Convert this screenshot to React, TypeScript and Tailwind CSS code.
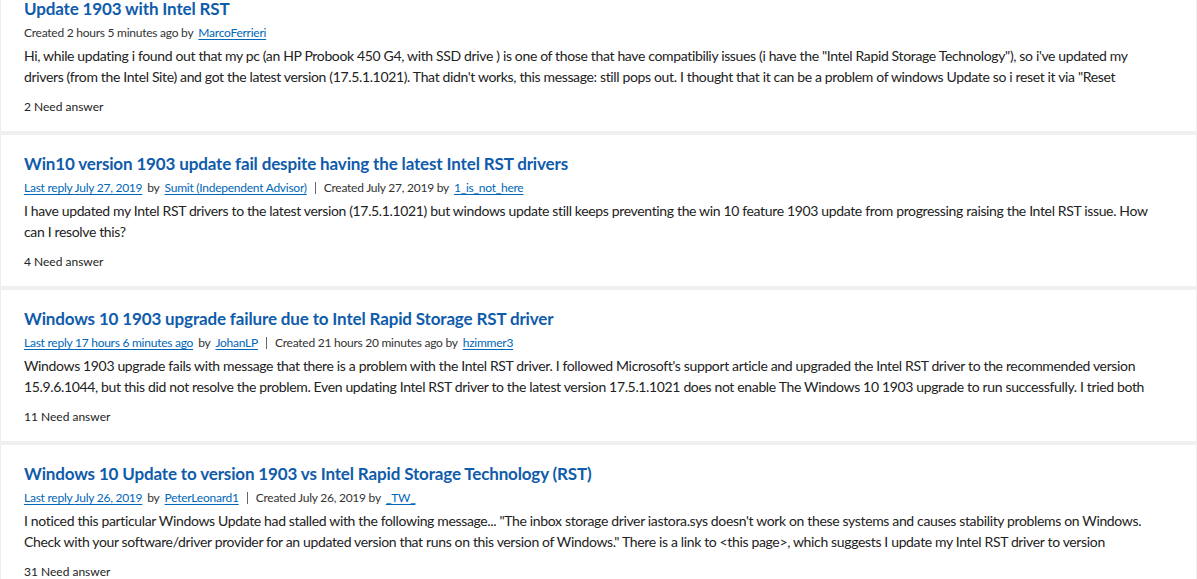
const FONT = "font-['Lato','Segoe_UI',sans-serif]";

type Post = {
  title: string;
  lastReply?: { when: string; by: string };
  created: string;
  createdBy: string;
  body: string;
  count: number;
};

const POSTS: Post[] = [
  {
    title: 'Update 1903 with Intel RST',
    created: '2 hours 5 minutes ago',
    createdBy: 'MarcoFerrieri',
    body:
      'Hi, while updating i found out that my pc (an HP Probook 450 G4, with SSD drive ) is one of those that have compatibiliy issues (i have the "Intel Rapid Storage Technology"), so i\'ve updated my drivers (from the Intel Site) and got the latest version (17.5.1.1021). That didn\'t works, this message: still pops out. I thought that it can be a problem of windows Update so i reset it via "Reset',
    count: 2,
  },
  {
    title: 'Win10 version 1903 update fail despite having the latest Intel RST drivers',
    lastReply: { when: 'July 27, 2019', by: 'Sumit (Independent Advisor)' },
    created: 'July 27, 2019',
    createdBy: '1_is_not_here',
    body:
      'I have updated my Intel RST drivers to the latest version (17.5.1.1021) but windows update still keeps preventing the win 10 feature 1903 update from progressing raising the Intel RST issue. How can I resolve this?',
    count: 4,
  },
  {
    title: 'Windows 10 1903 upgrade failure due to Intel Rapid Storage RST driver',
    lastReply: { when: '17 hours 6 minutes ago', by: 'JohanLP' },
    created: '21 hours 20 minutes ago',
    createdBy: 'hzimmer3',
    body:
      "Windows 1903 upgrade fails with message that there is a problem with the Intel RST driver. I followed Microsoft's support article and upgraded the Intel RST driver to the recommended version 15.9.6.1044, but this did not resolve the problem. Even updating Intel RST driver to the latest version 17.5.1.1021 does not enable The Windows 10 1903 upgrade to run successfully. I tried both",
    count: 11,
  },
  {
    title: 'Windows 10 Update to version 1903 vs Intel Rapid Storage Technology (RST)',
    lastReply: { when: 'July 26, 2019', by: 'PeterLeonard1' },
    created: 'July 26, 2019',
    createdBy: '_TW_',
    body:
      'I noticed this particular Windows Update had stalled with the following message... "The inbox storage driver iastora.sys doesn\'t work on these systems and causes stability problems on Windows. Check with your software/driver provider for an updated version that runs on this version of Windows." There is a link to <this page>, which suggests I update my Intel RST driver to version',
    count: 31,
  },
];

function UserLink({ children }: { children: React.ReactNode }) {
  return <a className="text-[#0067b8] underline underline-offset-2 decoration-[#0067b8]">{children}</a>;
}

function ThreadCard({ post }: { post: Post }) {
  return (
    <div className="border-l border-[#ececec] bg-white pl-[23px] pr-[40px] pt-[17px] pb-[15px]">
      <h2 className="text-[17px] font-bold leading-[24px] tracking-[-0.15px] text-[#0f5cab]">{post.title}</h2>
      <div className="flex items-center text-[12px] leading-[24px] tracking-[-0.25px] text-[#333]">
        {post.lastReply && (
          <>
            <UserLink>Last reply {post.lastReply.when}</UserLink>
            <span className="mx-[5px]">by</span>
            <UserLink>{post.lastReply.by}</UserLink>
            <span className="mx-[8px] inline-block h-[12px] w-px bg-[#666]" />
          </>
        )}
        <span>Created {post.created} by</span>
        <span className="ml-[5px]">
          <UserLink>{post.createdBy}</UserLink>
        </span>
      </div>
      <p className="max-h-[42px] overflow-hidden text-[14px] leading-[21px] tracking-[-0.35px] text-[#222]">
        {post.body}
      </p>
      <div className="mt-[11px] text-[12px] leading-[18px] text-[#222]">{post.count} Need answer</div>
    </div>
  );
}

export default function App() {
  return (
    <div className={`${FONT} min-h-screen bg-white`}>
      <div className="-mt-[20px] flex flex-col gap-[4px] bg-[#f0f0f0] pr-px">
        {POSTS.map((p) => (
          <ThreadCard key={p.title} post={p} />
        ))}
      </div>
    </div>
  );
}
